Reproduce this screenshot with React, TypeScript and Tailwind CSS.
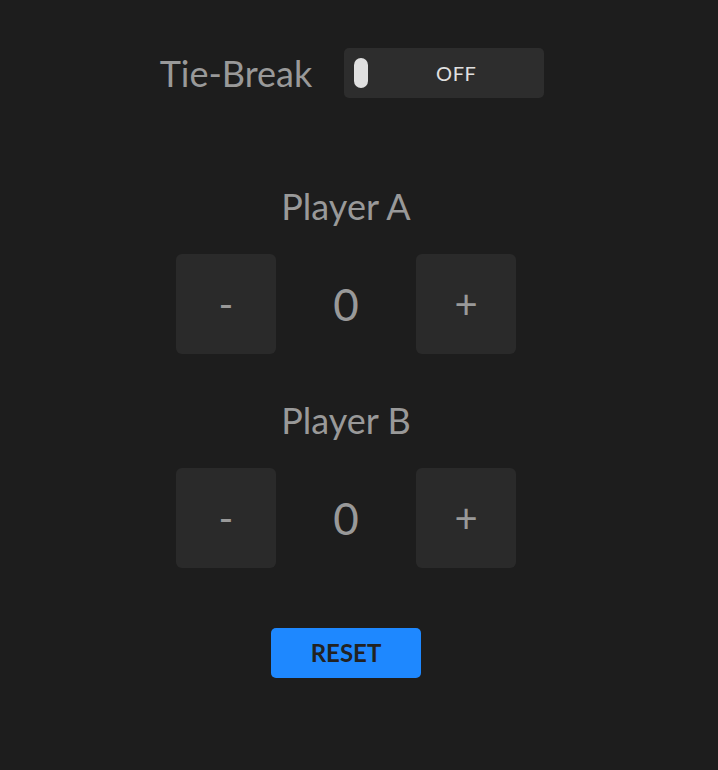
import { useState } from 'react'

function ScoreRow({ name, score, onDec, onInc }: { name: string; score: number; onDec: () => void; onInc: () => void }) {
  return (
    <div className="flex flex-col items-center">
      <h2 className="text-[36px] leading-[40px] text-[#999999]">{name}</h2>
      <div className="mt-[28px] flex items-center">
        <button
          onClick={onDec}
          className="w-[100px] h-[100px] rounded-md bg-[#2a2a2a] text-[40px] text-[#999999] flex items-center justify-center"
        >
          -
        </button>
        <span className="w-[140px] text-center text-[44px] text-[#999999]">{score}</span>
        <button
          onClick={onInc}
          className="w-[100px] h-[100px] rounded-md bg-[#2a2a2a] text-[40px] text-[#999999] flex items-center justify-center"
        >
          +
        </button>
      </div>
    </div>
  )
}

export default function App() {
  const [tieBreak, setTieBreak] = useState(false)
  const [a, setA] = useState(0)
  const [b, setB] = useState(0)

  return (
    <div className="min-h-[770px] bg-[#1d1d1d] font-['Lato',sans-serif]">
      <div className="w-[692px] flex flex-col items-center pt-[48px]">
        <div className="flex items-center gap-[32px] ml-[12px]">
          <span className="text-[36px] leading-[44px] text-[#999999]">Tie-Break</span>
          <button
            onClick={() => setTieBreak(!tieBreak)}
            className="relative w-[200px] h-[50px] rounded-[5px] bg-[#2d2d2d] pl-[24px] flex items-center justify-center"
          >
            <span className="absolute left-[10px] top-[10px] w-[14px] h-[30px] rounded-full bg-[#e0e0e0]" />
            <span className="text-[20px] tracking-[0.03em] text-[#e0e0e0]">{tieBreak ? 'ON' : 'OFF'}</span>
          </button>
        </div>

        <div className="mt-[88px] flex flex-col items-center gap-[46px]">
          <ScoreRow name="Player A" score={a} onDec={() => setA(Math.max(0, a - 1))} onInc={() => setA(a + 1)} />
          <ScoreRow name="Player B" score={b} onDec={() => setB(Math.max(0, b - 1))} onInc={() => setB(b + 1)} />
        </div>

        <button
          onClick={() => {
            setA(0)
            setB(0)
          }}
          className="mt-[60px] w-[150px] h-[50px] rounded-[5px] bg-[#1e88ff] text-[24px] font-bold text-[#222222]"
        >
          RESET
        </button>
      </div>
    </div>
  )
}
